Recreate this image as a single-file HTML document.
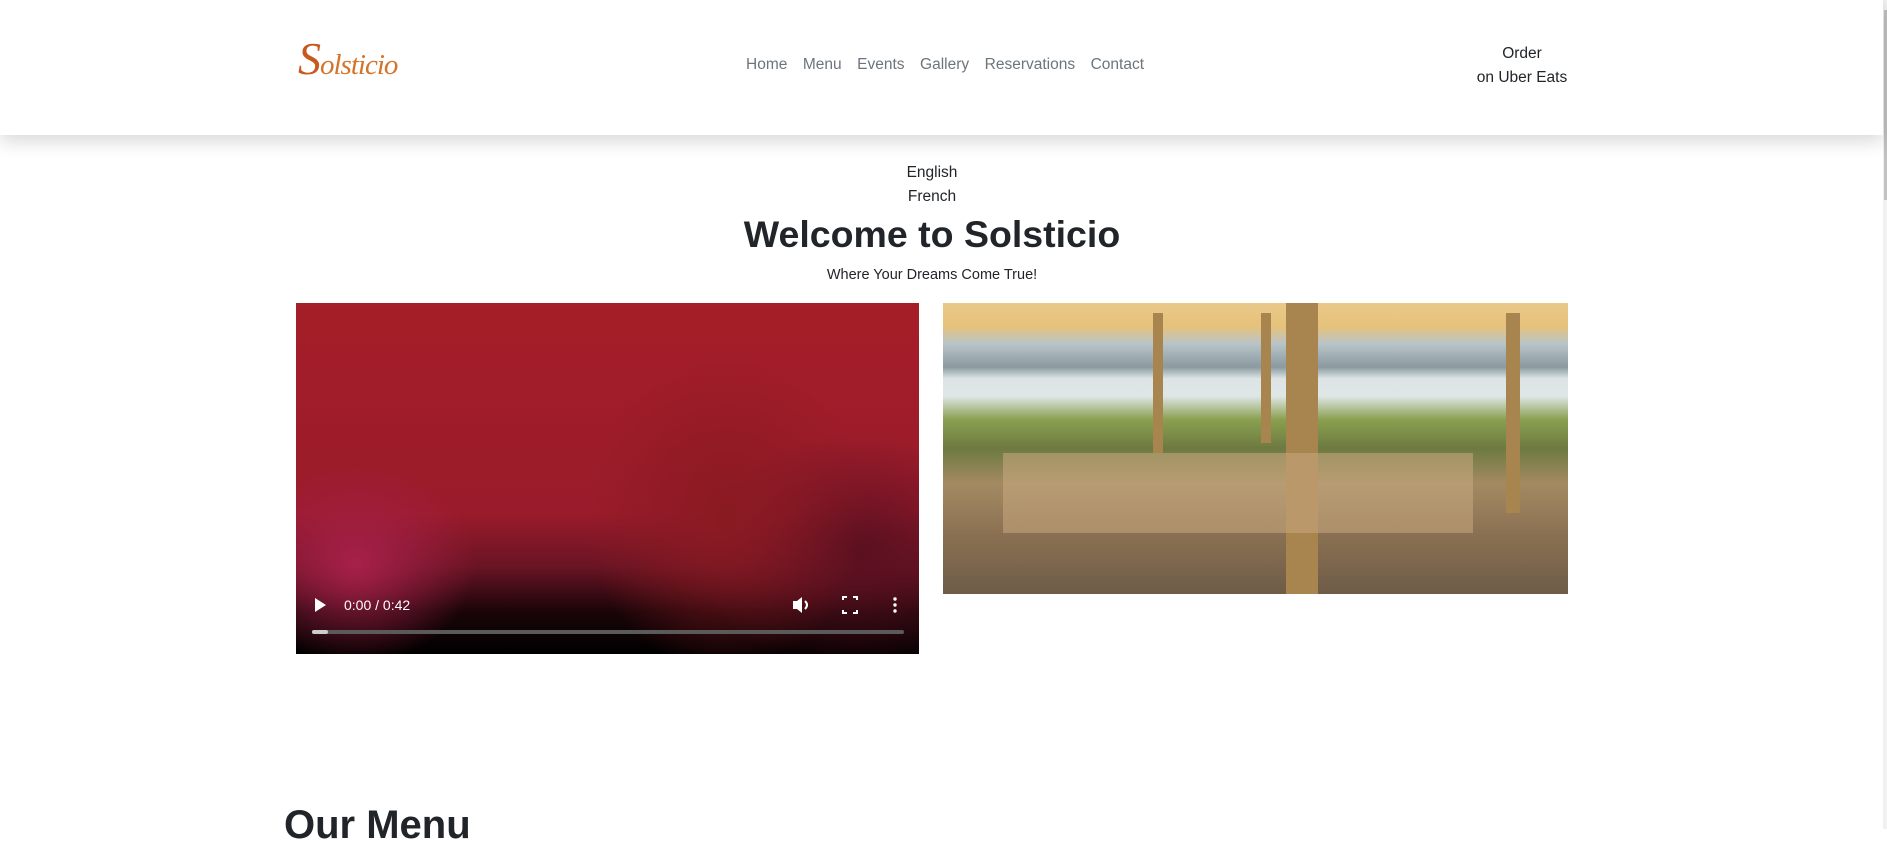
<!DOCTYPE html>
<html><head><meta charset="utf-8"><style>
*{margin:0;padding:0;box-sizing:border-box}
html,body{width:1887px;height:829px;overflow:hidden;background:#fff;font-family:"Liberation Sans",sans-serif;color:#212529}
.hdr{position:absolute;left:0;top:0;width:1883px;height:135px;background:#fff;box-shadow:0 6px 18px rgba(0,0,0,.16);z-index:2}
.sb{position:absolute;right:0;top:0;width:4px;height:829px;background:#f1f1f1}
.sb i{position:absolute;left:1px;top:10px;width:3px;height:190px;background:#c1c1c1}
.logo{position:absolute;left:298px;top:32px;font-family:"Liberation Serif",serif;font-style:italic;font-size:29px;color:#d4742a;letter-spacing:-1px}
.logo b{font-size:46px;font-weight:normal;color:#c8581f}
.nav{position:absolute;top:56px;left:746px;font-size:15.5px;color:#6c757d;white-space:nowrap}
.nav span{margin-right:15.5px}
.order{position:absolute;left:1422px;width:200px;top:42px;text-align:center;font-size:15.5px;line-height:24px}
.c{position:absolute;left:0;width:1864px;text-align:center}
.vid{position:absolute;left:296px;top:303px;width:623px;height:351px;overflow:hidden;background:
radial-gradient(ellipse 140px 160px at 430px 210px,#8a1a22,transparent),
radial-gradient(ellipse 120px 100px at 60px 260px,#a8204a,transparent),
radial-gradient(ellipse 160px 120px at 560px 250px,#5a1020,transparent),
linear-gradient(#a51e28,#9a1b2b 60%,#6a1424 75%,#1a0508 88%,#000)}
.img{position:absolute;left:943px;top:303px;width:625px;height:291px;overflow:hidden;background:
linear-gradient(180deg,#e9c98a 0,#e6c27a 8%,#b9c4c8 14%,#8a9aa0 22%,#dde4e6 26%,#dfe6e6 32%,#8aa050 40%,#6d7a40 50%,#a48a62 62%,#8a7052 80%,#6e5c48 100%)}
.post{position:absolute;background:#a8844e}
</style></head><body>
<div class="hdr">
<div class="logo"><b>S</b>olsticio</div>
<div class="nav"><span>Home</span><span>Menu</span><span>Events</span><span>Gallery</span><span>Reservations</span><span>Contact</span></div>
<div class="order">Order<br>on Uber Eats</div>
</div>
<div class="sb"><i></i></div>
<div class="c" style="top:161px;font-size:15.5px;line-height:24px">English<br>French</div>
<div class="c" style="top:213px;font-size:37.5px;font-weight:bold">Welcome to Solsticio</div>
<div class="c" style="top:267px;font-size:14.5px">Where Your Dreams Come True!</div>
<div class="vid">
<svg width="623" height="351" style="position:absolute;left:0;top:0">
<polygon points="19,295 19,309 30,302" fill="#fff"/>
<text x="48" y="307" fill="#fff" font-family="Liberation Sans" font-size="14">0:00 / 0:42</text>
<polygon points="497,298 501,298 506,294 506,310 501,306 497,306" fill="#fff"/>
<path d="M509,298 q4,4 0,8" stroke="#fff" stroke-width="2" fill="none"/>
<path d="M547,297v-3h4M557,294h4v3M561,307v3h-4M551,310h-4v-3" stroke="#fff" stroke-width="2" fill="none"/>
<circle cx="599" cy="296" r="1.7" fill="#fff"/><circle cx="599" cy="302" r="1.7" fill="#fff"/><circle cx="599" cy="308" r="1.7" fill="#fff"/>
<rect x="16" y="327" width="592" height="4" rx="2" fill="#5a5a5a"/>
<rect x="16" y="327" width="16" height="4" rx="2" fill="#ccc"/>
</svg>
</div>
<div class="img">
<div class="post" style="left:343px;top:0;width:32px;height:291px"></div>
<div class="post" style="left:210px;top:10px;width:10px;height:140px"></div>
<div class="post" style="left:318px;top:10px;width:10px;height:130px"></div>
<div class="post" style="left:563px;top:10px;width:14px;height:200px"></div>
<div style="position:absolute;left:60px;top:150px;width:470px;height:80px;background:#c8aa80;opacity:.55"></div>
</div>
<div style="position:absolute;left:284px;top:803px;font-size:40px;font-weight:bold">Our Menu</div>
</body></html>
